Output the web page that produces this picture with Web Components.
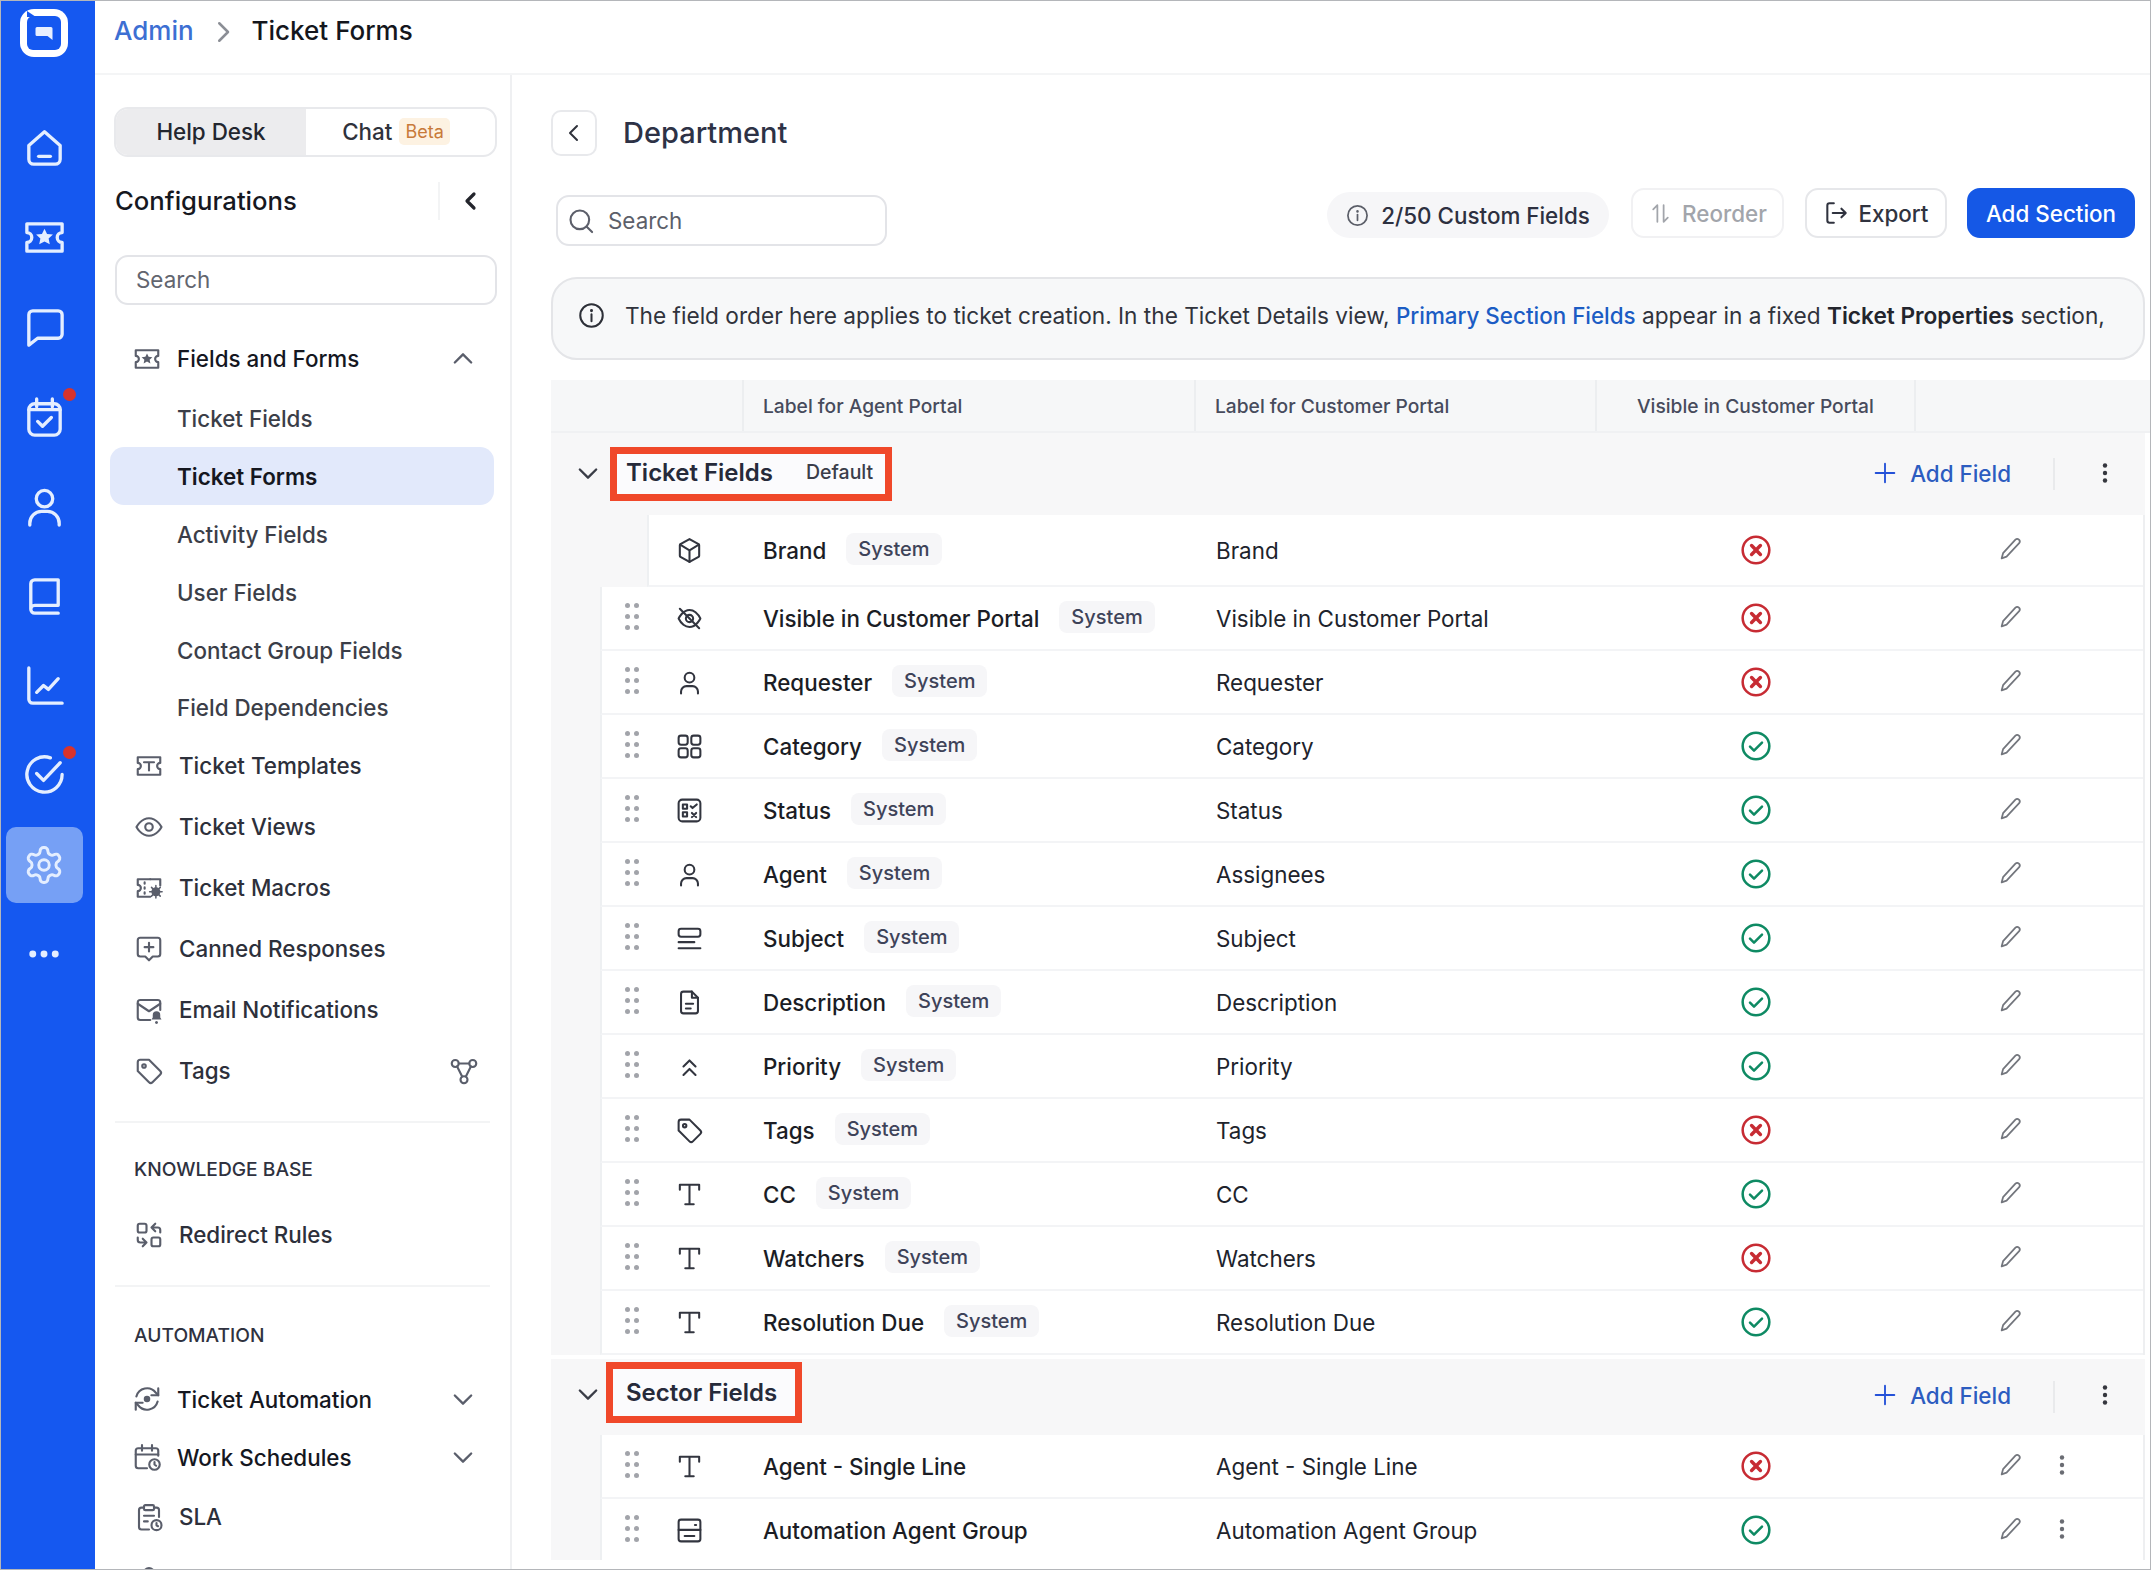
<!DOCTYPE html>
<html lang="en">
<head>
<meta charset="utf-8">
<title>Ticket Forms</title>
<style>
  html, body { margin: 0; padding: 0; background: #fff; overflow: hidden; }
  body { font-family: Inter, "Liberation Sans", sans-serif; color: #1d2029; }
</style>
</head>
<body>
<app-shell></app-shell>
<script>
// icon inner markup, all on a 24 box
const TICKET = 'M3 5h18v4.5a2.5 2.5 0 0 0 0 5V19H3v-4.500a2.5 2.5 0 0 0 0-5z';
const ICONS = {
  home: '<path d="M4 11l8-7 8 7v7a2.5 2.5 0 0 1-2.5 2.5h-11A2.5 2.5 0 0 1 4 18z"/><path d="M9 16.5h6"/>',
  tkstar: `<path d="${TICKET}"/><path fill="currentColor" stroke="none" d="M12 7.5l1.3 2.7 3 .3-2.200 2 .6 3-2.700-1.500-2.700 1.500.6-3-2.200-2 3-.3z"/>`,
  chat: '<path d="M6 4h13a2 2 0 0 1 2 2v10a2 2 0 0 1-2 2H8.5L4 21.5V6a2 2 0 0 1 2-2z"/>',
  calcheck: '<rect x="4" y="5.5" width="16" height="16" rx="3"/><path d="M8 3v4M16 3v4M4 8.5h16M8.5 14.5l2.5 2.5 4.5-4.5"/>',
  user: '<circle cx="12" cy="8" r="4.2"/><path d="M4.5 21.5v-1a6 6 0 0 1 6-6h3a6 6 0 0 1 6 6v1"/>',
  book: '<path d="M5 19V6a2 2 0 0 1 2-2h12v13H7a2 2 0 0 0-2 2 2 2 0 0 0 2 2h12"/>',
  chart: '<path d="M4 3v16a2 2 0 0 0 2 2h15"/><path d="M8 15.5l3.5-3.5 2.5 2 5-5.5"/>',
  target: '<path d="M21 12a9 9 0 1 1-6-8.5"/><path d="M8 11.5l3.5 3.5 8.5-9"/>',
  gear: '<path d="M12.22 2h-.44a2 2 0 0 0-2 2v.18a2 2 0 0 1-1 1.73l-.43.25a2 2 0 0 1-2 0l-.15-.08a2 2 0 0 0-2.73.73l-.22.38a2 2 0 0 0 .73 2.73l.15.1a2 2 0 0 1 1 1.72v.51a2 2 0 0 1-1 1.74l-.15.09a2 2 0 0 0-.73 2.73l.22.38a2 2 0 0 0 2.73.73l.15-.08a2 2 0 0 1 2 0l.43.25a2 2 0 0 1 1 1.73V20a2 2 0 0 0 2 2h.44a2 2 0 0 0 2-2v-.18a2 2 0 0 1 1-1.73l.43-.25a2 2 0 0 1 2 0l.15.08a2 2 0 0 0 2.73-.73l.22-.39a2 2 0 0 0-.73-2.73l-.15-.08a2 2 0 0 1-1-1.74v-.5a2 2 0 0 1 1-1.74l.15-.09a2 2 0 0 0 .73-2.73l-.22-.38a2 2 0 0 0-2.73-.73l-.15.08a2 2 0 0 1-2 0l-.43-.25a2 2 0 0 1-1-1.73V4a2 2 0 0 0-2-2z"/><circle cx="12" cy="12" r="3"/>',
  more: '<g fill="currentColor" stroke="none"><circle cx="4.5" cy="12" r="2.3"/><circle cx="12" cy="12" r="2.3"/><circle cx="19.5" cy="12" r="2.3"/></g>',
  tkt: `<path d="${TICKET}"/><path d="M8 9h8M12 9v6.500"/>`,
  macro: '<path d="M13 5H3v4.500a2.500 2.500 0 0 1 0 5V19h10"/><path d="M13 5h8v5"/><path d="M8.5 7.500v1M8.5 11.500v1M8.500 15.500v1"/><circle cx="17.5" cy="15" r="3.6" fill="currentColor" stroke="none"/><path d="M17.5 10v10M12.5 15h10M14 11.5l7 7M21 11.5l-7 7" stroke-width="1.2"/>',
  eye: '<path d="M2 12s3.5-7 10-7 10 7 10 7-3.5 7-10 7-10-7-10-7z"/><circle cx="12" cy="12" r="3"/>',
  canned: '<path d="M5 3h14a2 2 0 0 1 2 2v11a2 2 0 0 1-2 2h-4l-3 3-3-3H5a2 2 0 0 1-2-2V5a2 2 0 0 1 2-2z"/><path d="M12 7v7M8.5 10.5h7"/>',
  mail: '<path d="M21 12V6a2 2 0 0 0-2-2H5a2 2 0 0 0-2 2v12a2 2 0 0 0 2 2h8"/><path d="M3 7l9 6 9-6"/><path fill="currentColor" stroke="none" d="M18 13a3 3 0 0 1 3 3v2l1 1.5h-8l1-1.5v-2a3 3 0 0 1 3-3z"/><circle cx="18" cy="22" r="1.2" fill="currentColor" stroke="none"/>',
  tag: '<path d="M3 5a2 2 0 0 1 2-2h7l9 9a2 2 0 0 1 0 2.8L14.8 21a2 2 0 0 1-2.8 0L3 12z"/><circle cx="8" cy="8" r="1.4"/>',
  nodes: '<circle cx="5" cy="6" r="2.8"/><circle cx="19" cy="6" r="2.8"/><circle cx="12" cy="19" r="2.8"/><path d="M7.8 6h8.4M6.5 8.4l4 8M17.5 8.4l-4 8"/>',
  redirect: '<rect x="3" y="3" width="7" height="7" rx="1.5"/><rect x="14" y="14" width="7" height="7" rx="1.5"/><path d="M17 3l-3 3 3 3M14 6h5a2 2 0 0 1 2 2v2"/><path d="M7 21l3-3-3-3M10 18H5a2 2 0 0 1-2-2v-2"/>',
  sync: '<path d="M3.5 10a8.8 8.8 0 0 1 15.4-3.2L21 9"/><path d="M21 3.5V9h-5.5"/><path d="M20.5 14a8.8 8.8 0 0 1-15.4 3.2L3 15"/><path d="M3 20.5V15h5.5"/><circle cx="12" cy="12" r="2.6" fill="currentColor" stroke="none"/>',
  calclock: '<path d="M21 11V7a2 2 0 0 0-2-2H5a2 2 0 0 0-2 2v12a2 2 0 0 0 2 2h7"/><path d="M8 2.5V7M16 2.5V7M3 10h18"/><circle cx="18" cy="18" r="4.2"/><path d="M18 16v2l1.3 1"/>',
  clipclock: '<path d="M8 4.5H6a2 2 0 0 0-2 2V20a2 2 0 0 0 2 2h6"/><path d="M16 4.5h2a2 2 0 0 1 2 2V12"/><rect x="8" y="2.5" width="8" height="4" rx="1"/><path d="M8 11h8M8 15.5h3"/><circle cx="18" cy="18.5" r="4"/><path d="M18 16.8v1.8l1.2.8"/>',
  cube: '<path d="M12 2.5l7.500 4.300a1 1 0 0 1 .5.9v8.600a1 1 0 0 1-.5.9L12 21.500l-7.500-4.300a1 1 0 0 1-.5-.9V7.700a1 1 0 0 1 .5-.9z"/><path d="M4.3 7.200L12 11.800l7.700-4.600M12 11.800v9.700"/>',
  eyeoff: '<path d="M3 12s3.3-7 9-7c2 0 3.6.7 5 1.8M21 12s-3.3 7-9 7c-2 0-3.6-.7-5-1.8M3 12c.8 1.7 2.2 3.7 4 5.2M21 12c-.8-1.7-2.2-3.7-4-5.2"/><circle cx="12" cy="12" r="3"/><path d="M4 4l16 16"/>',
  person: '<circle cx="12" cy="8" r="4"/><path d="M5 21v-1.5a4.5 4.5 0 0 1 4.5-4.5h5a4.5 4.5 0 0 1 4.5 4.5V21"/>',
  grid: '<rect x="3" y="3" width="7.5" height="7.5" rx="2"/><rect x="13.5" y="3" width="7.5" height="7.5" rx="2"/><rect x="3" y="13.5" width="7.5" height="7.5" rx="2"/><rect x="13.5" y="13.5" width="7.5" height="7.5" rx="2"/>',
  status: '<rect x="3" y="3" width="18" height="18" rx="3"/><rect x="6.5" y="7" width="3.5" height="3.5"/><rect x="6.5" y="13.5" width="3.5" height="3.5"/><path d="M13 8.5l1.5 1.5L18 7M14 14l3.5 3.5M17.5 14L14 17.5"/>',
  subject: '<rect x="3" y="4" width="18" height="6.5" rx="2"/><path d="M3 15h13M3 20h18"/>',
  doc: '<path d="M7 3h7l5 5v11a2 2 0 0 1-2 2H7a2 2 0 0 1-2-2V5a2 2 0 0 1 2-2z"/><path d="M14 3v5h5M9 13h6M9 17h4"/>',
  dblup: '<path d="M7 12l5-5 5 5M7 19l5-5 5 5"/>',
  serif: '<path d="M4 8V4h16v4M12 4v16M8.5 20h7"/>',
  server: '<rect x="3" y="3" width="18" height="18" rx="2"/><path d="M3 11.5h18M8 16.5h8M16.5 7.5h1"/>',
  info: '<circle cx="12" cy="12" r="10"/><path d="M12 11v6"/><path d="M12 7.5v.2" stroke-width="2.6"/>',
  search: '<circle cx="11" cy="11" r="8"/><path d="M21.5 21.5l-4.8-4.8"/>',
  reorder: '<path d="M9 20V4L5 8"/><path d="M15 4v16l4-4"/>',
  export: '<path d="M10 3H6a2 2 0 0 0-2 2v14a2 2 0 0 0 2 2h4"/><path d="M9 12h12M17 8l4 4-4 4"/>',
  plus: '<path d="M12 4v16M4 12h16"/>',
  kebab: '<g fill="currentColor" stroke="none"><circle cx="12" cy="4.5" r="2.2"/><circle cx="12" cy="12" r="2.2"/><circle cx="12" cy="19.5" r="2.2"/></g>',
  pencil: '<path d="M15.8 4a2.2 2.2 0 0 1 3.2 3L8.2 18.5 4 20l1.2-4.4z"/>',
  ok: '<circle cx="12" cy="12" r="10"/><path d="M7.5 12.5l3 3 6-6"/>',
  no: '<circle cx="12" cy="12" r="10"/><path d="M8.7 8.7l6.6 6.6M15.3 8.7l-6.6 6.6" stroke-width="2.6"/>',
  left: '<path d="M15 5l-7 7 7 7"/>',
  right: '<path d="M9 5l7 7-7 7"/>',
  down: '<path d="M5 9l7 7 7-7"/>',
  up: '<path d="M5 15l7-7 7 7"/>'
};

class XIcon extends HTMLElement {
  connectedCallback() {
    const size = this.getAttribute('size') || 24;
    const sw = this.getAttribute('stroke') || 2;
    const root = this.shadowRoot || this.attachShadow({ mode: 'open' });
    root.innerHTML = `
      <style>
        :host { display: inline-flex; flex: none; width: ${size}px; height: ${size}px; }
        svg { width: 100%; height: 100%; display: block; overflow: visible; }
      </style>
      <svg viewBox="0 0 24 24" fill="none" stroke="currentColor" stroke-width="${sw}" stroke-linecap="round" stroke-linejoin="round">${ICONS[this.getAttribute('name')] || ''}</svg>`;
  }
}
customElements.define('x-icon', XIcon);

class RailItem extends HTMLElement {
  connectedCallback() {
    const active = this.hasAttribute('active');
    const dot = this.hasAttribute('dot');
    this.attachShadow({ mode: 'open' }).innerHTML = `
      <style>
        :host { display: flex; height: 89.6px; align-items: center; justify-content: center; padding-right: 8px; }
        .box { position: relative; width: 77px; height: 76px; border-radius: 10px; display: flex; align-items: center; justify-content: center; color: #e4eeff; ${active ? 'background: #76a0f5;' : ''} }
        .dot { position: absolute; top: 9px; left: 57px; width: 13px; height: 13px; border-radius: 50%; background: #d8332c; }
      </style>
      <div class="box">
        <x-icon name="${this.getAttribute('name')}" size="${this.getAttribute('size') || 47}" stroke="1.7"></x-icon>
        ${dot ? '<span class="dot"></span>' : ''}
      </div>`;
  }
}
customElements.define('rail-item', RailItem);

class NavRail extends HTMLElement {
  constructor() {
    super();
    this.attachShadow({ mode: 'open' }).innerHTML = `
      <style>
        :host { display: flex; flex-direction: column; flex: none; width: 94px; background: #1558f0; overflow: hidden; }
        .logo { height: 102px; display: flex; justify-content: center; padding: 7px 8px 0 0; box-sizing: border-box; }
        svg { width: 50px; height: 50px; display: block; }
      </style>
      <div class="logo">
        <svg viewBox="0 0 50 50">
          <rect x="1" y="1" width="48" height="48" rx="14" fill="#fff"/>
          <rect x="8" y="8" width="34" height="34" rx="6" fill="#1558f0"/>
          <path d="M8 3l9 6H8z" fill="#1558f0"/>
          <path d="M18 19h14a1.5 1.5 0 0 1 1.5 1.5V32l-5-4H18a1.5 1.5 0 0 1-1.5-1.5v-6A1.5 1.5 0 0 1 18 19z" fill="#e8efff"/>
        </svg>
      </div>
      <slot></slot>`;
  }
}
customElements.define('nav-rail', NavRail);

class TopBar extends HTMLElement {
  constructor() {
    super();
    this.attachShadow({ mode: 'open' }).innerHTML = `
      <style>
        :host { display: flex; align-items: center; height: 74px; box-sizing: border-box; padding: 0 0 13px 19px; border-bottom: 2px solid #f4f5f6; font-size: 26px; font-weight: 500; flex: none; }
        a { color: #3d6fd3; }
        x-icon { color: #8b8e95; margin: 2px 14px 0 14px; }
        b { font-weight: 500; color: #14161c; }
      </style>
      <a>Admin</a><x-icon name="right" size="30" stroke="2"></x-icon><b>Ticket Forms</b>`;
  }
}
customElements.define('top-bar', TopBar);

class SideItem extends HTMLElement {
  connectedCallback() {
    const icon = this.getAttribute('icon');
    const kind = this.getAttribute('kind') || 'top'; // top, head, sub, active
    const after = this.getAttribute('after');
    const hs = this.getAttribute('h') || { head: 61, sub: 58, active: 58, top: 61 }[kind];
    const left = kind === 'head' ? 25 : kind === 'top' ? 27 : kind === 'active' ? 67 : 70;
    const active = kind === 'active';
    const nodes = after === 'nodes';
    this.attachShadow({ mode: 'open' }).innerHTML = `
      <style>
        :host { display: block; }
        .row { display: flex; align-items: center; height: ${hs}px; box-sizing: border-box; padding: 0 ${nodes ? 19 : 21}px 0 ${left}px; border-radius: 14px;
          ${active ? 'margin: 0 4px 0 3px;' : ''}
          font-size: 22.4px; font-weight: ${active ? 600 : 500}; color: ${kind === 'head' || active ? '#15171f' : kind === 'sub' ? '#3b3e48' : '#2d303b'}; ${active ? 'background: #e2e9fb;' : ''} }
        .ic { color: #5a5e6b; margin-right: 15px; }
        .txt { flex: 1; white-space: nowrap; }
        .af { color: #5a5e6b; }
      </style>
      <div class="row">
        ${icon ? `<x-icon class="ic" name="${icon}" size="30" stroke="1.7"></x-icon>` : ''}
        <span class="txt"><slot></slot></span>
        ${after ? `<x-icon class="af" name="${after}" size="${nodes ? 30 : 28}" stroke="${nodes ? 1.7 : 2}"></x-icon>` : ''}
      </div>`;
  }
}
customElements.define('side-item', SideItem);

class SideLabel extends HTMLElement {
  constructor() {
    super();
    this.attachShadow({ mode: 'open' }).innerHTML = `
      <style>
        :host { display: flex; align-items: center; padding-left: 27px; font-size: 19.2px; font-weight: 500; color: #2f3240; height: 30px; }
      </style>
      <slot></slot>`;
  }
}
customElements.define('side-label', SideLabel);

class ConfigSidebar extends HTMLElement {
  constructor() {
    super();
    this.attachShadow({ mode: 'open' }).innerHTML = `
      <style>
        :host { display: block; flex: none; width: 417px; box-sizing: border-box; border-right: 2px solid #eff0f2; padding: 32px 16px 0 16px; overflow: hidden; }
        .tabs { display: flex; width: 383px; margin-left: 3px; height: 50px; box-sizing: border-box; border: 2px solid #e8e9ec; border-radius: 14px; overflow: hidden; font-size: 22.4px; font-weight: 500; }
        .tabs div { display: flex; align-items: center; justify-content: center; padding-bottom: 2px; box-sizing: border-box; }
        .hd { width: 190px; background: #ececee; color: #23262f; }
        .ct { flex: 1; color: #2f323c; padding-right: 9px; }
        .beta { margin-left: 7px; padding: 3px 6px; font-size: 18px; color: #c87a3a; background: #fdf2e2; border-radius: 5px; font-weight: 400; }
        .cfg { display: flex; align-items: center; height: 87px; margin: 0 0 11px 4px; font-size: 25.7px; font-weight: 500; color: #16181f; }
        .cfg span { flex: 1; }
        .cfg i { width: 2px; height: 38px; background: #f3f4f5; margin-right: 19px; }
        .cfg x-icon { margin-right: 11px; color: #23252c; }
        .find { display: flex; align-items: center; width: 382px; height: 50px; margin-left: 4px; box-sizing: border-box; padding: 0 0 2px 19px; border: 2px solid #e3e4e8; border-radius: 13px; font-size: 22.4px; color: #62656f; }
        .nav { margin-top: 23px; margin-left: -4px; width: 391px; }
        hr { border: 0; height: 2px; background: #f3f4f5; margin: 0 8px 0 8px; }
      </style>
      <div class="tabs"><div class="hd">Help Desk</div><div class="ct">Chat<span class="beta">Beta</span></div></div>
      <div class="cfg"><span>Configurations</span><i></i><x-icon name="left" size="24" stroke="3.2"></x-icon></div>
      <div class="find">Search</div>
      <div class="nav">
        <side-item kind="head" icon="tkstar" after="up">Fields and Forms</side-item>
        <side-item kind="sub">Ticket Fields</side-item>
        <side-item kind="active">Ticket Forms</side-item>
        <side-item kind="sub">Activity Fields</side-item>
        <side-item kind="sub">User Fields</side-item>
        <side-item kind="sub">Contact Group Fields</side-item>
        <side-item kind="sub" h="56">Field Dependencies</side-item>
        <side-item icon="tkt">Ticket Templates</side-item>
        <side-item icon="eye">Ticket Views</side-item>
        <side-item icon="macro">Ticket Macros</side-item>
        <side-item icon="canned">Canned Responses</side-item>
        <side-item icon="mail">Email Notifications</side-item>
        <side-item icon="tag" after="nodes">Tags</side-item>
        <hr style="margin-top:20px">
        <div style="height:31px"></div>
        <side-label>KNOWLEDGE BASE</side-label>
        <div style="height:20px"></div>
        <side-item icon="redirect">Redirect Rules</side-item>
        <hr style="margin-top:20px">
        <div style="height:33px"></div>
        <side-label>AUTOMATION</side-label>
        <div style="height:20px"></div>
        <side-item kind="head" h="58" icon="sync" after="down">Ticket Automation</side-item>
        <side-item kind="head" h="58" icon="calclock" after="down">Work Schedules</side-item>
        <side-item icon="clipclock">SLA</side-item>
        <side-item icon="person"> </side-item>
      </div>`;
  }
}
customElements.define('config-sidebar', ConfigSidebar);

class SysChip extends HTMLElement {
  constructor() {
    super();
    this.attachShadow({ mode: 'open' }).innerHTML = `
      <style>
        :host { display: inline-flex; align-items: center; height: 32px; padding: 0 12px; margin: -3px 0 0 20px; border-radius: 8px; background: #f6f6f8; color: #3e4359; font-size: 20px; font-weight: 500; }
      </style>
      <slot></slot>`;
  }
}
customElements.define('sys-chip', SysChip);

class FieldRow extends HTMLElement {
  connectedCallback() {
    const a = n => this.getAttribute(n);
    const first = this.hasAttribute('first');
    const ok = a('vis') === 'ok';
    this.attachShadow({ mode: 'open' }).innerHTML = `
      <style>
        :host { display: block; height: ${first ? 72 : 64}px; box-sizing: border-box; background: ${first ? '#f7f7f8' : '#fff'}; }
        .row { display: grid; height: 100%; box-sizing: border-box; grid-template-columns: ${first ? 16 : 63}px 98px 453px 381px 318px 1fr; align-items: center; margin-left: ${first ? 47 : 0}px;
          background: #fff; border-left: 2px solid #eef0f2; border-bottom: 2px solid #f3f4f6; font-size: 22.4px; font-weight: 500; color: #1b1d25; }
        .grip { display: grid; grid-template-columns: 5px 5px; column-gap: 4px; row-gap: 6px; justify-content: end; margin-top: -3px; width: 37px; }
        .grip i { width: 5px; height: 5px; border-radius: 50%; background: #a2a4aa; }
        .ty { color: #32353f; justify-self: start; margin-left: 9.5px; }
        .lb { display: flex; align-items: center; white-space: nowrap; }
        .cu { font-weight: 400; color: #20232c; white-space: nowrap; }
        .vis { justify-self: center; color: ${ok ? '#0e8a63' : '#c72b33'}; }
        .act { display: flex; align-items: center; padding-left: 82px; gap: 25px; color: #73767d; margin-top: -3px; }
        .act .k { color: #6a6c73; }
      </style>
      <div class="row">
        <div>${first ? '' : '<div class="grip"><i></i><i></i><i></i><i></i><i></i><i></i></div>'}</div>
        <x-icon class="ty" name="${a('icon')}" size="29" stroke="1.7"></x-icon>
        <div class="lb"><slot></slot>${this.hasAttribute('system') ? '<sys-chip>System</sys-chip>' : ''}</div>
        <div class="cu">${a('customer')}</div>
        <x-icon class="vis" name="${a('vis')}" size="32" stroke="1.9"></x-icon>
        <div class="act"><x-icon name="pencil" size="28" stroke="1.5"></x-icon>${this.hasAttribute('more') ? '<x-icon class="k" name="kebab" size="24"></x-icon>' : ''}</div>
      </div>`;
  }
}
customElements.define('field-row', FieldRow);

class FieldSection extends HTMLElement {
  connectedCallback() {
    const first = this.hasAttribute('first');
    const badge = this.getAttribute('badge');
    this.attachShadow({ mode: 'open' }).innerHTML = `
      <style>
        :host { display: block; background: #f7f7f8; }
        .head { display: flex; align-items: center; box-sizing: border-box; height: ${first ? 82 : 76}px; background: #f7f7f8; padding: 0 28px 0 23px; color: #2f3240; }
        .gap { height: ${first ? 0 : 4}px; background: #fff; }
        .chev { margin: ${first ? -3 : -7}px ${first ? 8 : 4}px 0 0; color: #3a3d47; }
        .title { display: flex; align-items: center; box-sizing: border-box; height: ${first ? 54 : 61}px; padding: 0 ${first ? 12 : 18}px ${first ? 3 : 0}px ${first ? 9 : 13}px; border: 7px solid #f0482a; background: #fbfbfd; margin-top: ${first ? -1 : -9}px; font-size: 24px; font-weight: 600; color: #262a3a; white-space: nowrap; }
        .badge { margin-left: 33px; font-size: 19.5px; font-weight: 500; color: #3a3d4a; }
        .sp { flex: 1; }
        .add { display: flex; align-items: center; gap: 11px; font-size: 22.4px; font-weight: 500; color: #2c5cc0; margin-top: ${first ? -2 : -4}px; }
        .add x-icon { color: #2552d8; }
        i { width: 2px; height: 32px; background: #e9eaec; margin: 0 38px 0 42px; }
        .k { color: #35373e; margin-top: ${first ? -2 : -5}px; }
        .body { border-right: 2px solid #eeeff1; margin-left: 49px; ${first ? '' : 'height: 125px; overflow: hidden;'} }
      </style>
      <div class="gap"></div>
      <div class="head">
        <x-icon class="chev" name="down" size="28" stroke="2"></x-icon>
        <div class="title"><slot name="title"></slot>${badge ? `<span class="badge">${badge}</span>` : ''}</div>
        <span class="sp"></span>
        <div class="add"><x-icon name="plus" size="28" stroke="1.6"></x-icon>Add Field</div>
        <i></i><x-icon class="k" name="kebab" size="24"></x-icon>
      </div>
      <div class="body"><slot></slot></div>`;
  }
}
customElements.define('field-section', FieldSection);

class TableHead extends HTMLElement {
  constructor() {
    super();
    this.attachShadow({ mode: 'open' }).innerHTML = `
      <style>
        :host { display: grid; grid-template-columns: 193px 452px 401px 319px 1fr; height: 53px; background: #f6f7f8; border-bottom: 2px solid #f0f1f3; box-sizing: border-box; margin-right: -6px; font-size: 19.2px; font-weight: 500; color: #474b5c; }
        div { display: flex; align-items: center; box-sizing: border-box; padding-left: 19px; border-right: 2px solid #eceef0; }
        div:last-child { border: 0; }
        .v { padding-left: 40px; }
      </style>
      <div></div><div>Label for Agent Portal</div><div>Label for Customer Portal</div><div class="v">Visible in Customer Portal</div><div></div>`;
  }
}
customElements.define('table-head', TableHead);

class DepartmentPage extends HTMLElement {
  constructor() {
    super();
    this.attachShadow({ mode: 'open' }).innerHTML = `
      <style>
        :host { display: block; flex: 1; min-width: 0; box-sizing: border-box; padding: 35px 5px 0 39px; overflow: hidden; }
        .title { display: flex; align-items: center; height: 46px; font-size: 29px; font-weight: 500; color: #2d3246; }
        .title span.name { padding-bottom: 2px; }
        .back { display: flex; align-items: center; justify-content: center; width: 46px; height: 46px; box-sizing: border-box; border: 2px solid #e8e9ec; border-radius: 10px; margin-right: 26px; color: #30333c; }
        .bar { display: flex; align-items: flex-start; height: 58px; margin: 32px 10px 0 5px; font-size: 22.4px; font-weight: 500; }
        .find { display: flex; align-items: center; gap: 13px; width: 331px; height: 51px; margin-top: 7px; box-sizing: border-box; padding-left: 9px; border: 2px solid #e3e4e8; border-radius: 13px; color: #5c5f6a; font-weight: 400; }
        .sp { flex: 1; }
        .count { display: flex; align-items: center; justify-content: center; gap: 12px; width: 282px; height: 46px; margin-top: 4px; border-radius: 23px; background: #f6f6f8; color: #2d3040; margin-right: 22px; }
        .count x-icon { color: #5b5e68; }
        .btn { display: flex; align-items: center; justify-content: center; gap: 9px; height: 50px; box-sizing: border-box; border: 2px solid #e6e7ea; border-radius: 13px; margin-right: 20px; color: #30333f; background: #fff; }
        .off { color: #a2a5ab; border-color: #f1f1f3; width: 153px; margin-right: 21px; }
        .exp { width: 142px; }
        .pri { background: #1558e6; border-color: #1558e6; color: #fff; margin: 0; width: 168px; }
        .note { display: flex; align-items: center; gap: 20px; height: 83px; margin: 31px 0 20px 0; box-sizing: border-box; padding: 0 0 6px 25px; border: 2px solid #e4e5e8; border-radius: 26px; background: #f7f8f9; font-size: 22.65px; color: #30333c; white-space: nowrap; overflow: hidden; }
        .note a { color: #1b5cc4; font-weight: 500; font-size: 22.4px; }
        .note b { font-weight: 600; color: #23252d; }
        .note x-icon { color: #2d3038; }
      </style>
      <div class="title"><span class="back"><x-icon name="left" size="24" stroke="2"></x-icon></span><span class="name">Department</span></div>
      <div class="bar">
        <div class="find"><x-icon name="search" size="28" stroke="1.8"></x-icon>Search</div>
        <span class="sp"></span>
        <div class="count"><x-icon name="info" size="23" stroke="1.8"></x-icon>2/50 Custom Fields</div>
        <div class="btn off"><x-icon name="reorder" size="25" stroke="1.7"></x-icon>Reorder</div>
        <div class="btn exp"><x-icon name="export" size="26" stroke="1.9"></x-icon>Export</div>
        <div class="btn pri">Add Section</div>
      </div>
      <div class="note"><x-icon name="info" size="27" stroke="1.8"></x-icon><span>The field order here applies to ticket creation. In the Ticket Details view, <a>Primary Section Fields</a> appear in a fixed <b>Ticket Properties</b> section,</span></div>
      <table-head></table-head>
      <slot></slot>`;
  }
}
customElements.define('department-page', DepartmentPage);

const SYSTEM_ROWS = [
  ['eyeoff', 'Visible in Customer Portal', 'Visible in Customer Portal', 'no'],
  ['person', 'Requester', 'Requester', 'no'],
  ['grid', 'Category', 'Category', 'ok'],
  ['status', 'Status', 'Status', 'ok'],
  ['person', 'Agent', 'Assignees', 'ok'],
  ['subject', 'Subject', 'Subject', 'ok'],
  ['doc', 'Description', 'Description', 'ok'],
  ['dblup', 'Priority', 'Priority', 'ok'],
  ['tag', 'Tags', 'Tags', 'no'],
  ['serif', 'CC', 'CC', 'ok'],
  ['serif', 'Watchers', 'Watchers', 'no'],
  ['serif', 'Resolution Due', 'Resolution Due', 'ok']
];
const SECTOR_ROWS = [
  ['serif', 'Agent - Single Line', 'Agent - Single Line', 'no'],
  ['server', 'Automation Agent Group', 'Automation Agent Group', 'ok']
];

class AppShell extends HTMLElement {
  constructor() {
    super();
    const rows = (list, extra) => list.map(r =>
      `<field-row icon="${r[0]}" customer="${r[2]}" vis="${r[3]}" ${extra}>${r[1]}</field-row>`).join('');
    this.attachShadow({ mode: 'open' }).innerHTML = `
      <style>
        :host { display: flex; width: 2151px; height: 1570px; box-sizing: border-box; border: 1px solid #b4b6ba; overflow: hidden; background: #fff; }
        .col { flex: 1; min-width: 0; display: flex; flex-direction: column; }
        .below { flex: 1; min-height: 0; display: flex; }
      </style>
      <nav-rail>
        <rail-item name="home"></rail-item>
        <rail-item name="tkstar"></rail-item>
        <rail-item name="chat"></rail-item>
        <rail-item name="calcheck" dot></rail-item>
        <rail-item name="user"></rail-item>
        <rail-item name="book"></rail-item>
        <rail-item name="chart"></rail-item>
        <rail-item name="target" dot></rail-item>
        <rail-item name="gear" size="42" active></rail-item>
        <rail-item name="more" size="36"></rail-item>
      </nav-rail>
      <div class="col">
        <top-bar></top-bar>
        <div class="below">
          <config-sidebar></config-sidebar>
          <department-page>
            <field-section first badge="Default">
              <span slot="title">Ticket Fields</span>
              <field-row first system icon="cube" customer="Brand" vis="no">Brand</field-row>
              ${rows(SYSTEM_ROWS, 'system')}
            </field-section>
            <field-section>
              <span slot="title">Sector Fields</span>
              ${rows(SECTOR_ROWS, 'more')}
            </field-section>
          </department-page>
        </div>
      </div>`;
  }
}
customElements.define('app-shell', AppShell);
</script>
</body>
</html>
